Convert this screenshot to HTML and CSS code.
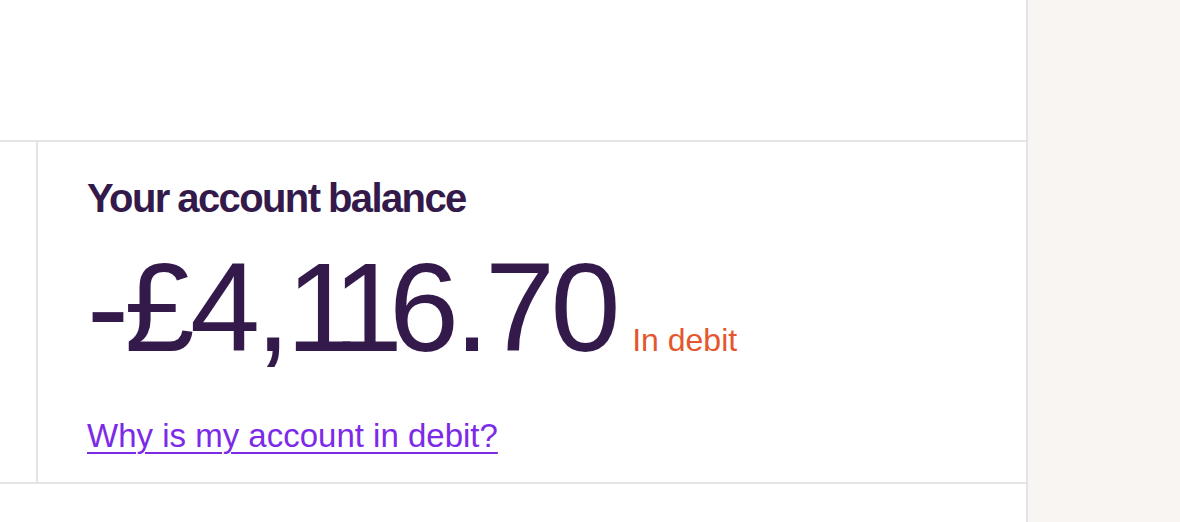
FILE: index.html
```html
<html>
	<head>
		<link rel="stylesheet" href="styles.css">
	</head>
	<body>
		<div class="page">
			<div class="main">
				<div class="topSpace"></div>
				<div class="balanceRow">
					<div class="gutter"></div>
					<div class="balanceBox">
						<h2 class="balanceTitle">Your account balance</h2>
						<div class="amountLine">
							<span class="amount">-£4,<span class="narrowOnes">11</span>6.70</span>
							<span class="debitTag">In debit</span>
						</div>
						<a href="#" class="debitLink">Why is my account in debit?</a>
					</div>
				</div>
			</div>
			<div class="side"></div>
		</div>
	</body>
</html>
```

FILE: styles.css
```css
body{ margin: 0; background: #ffffff; font-family: "Liberation Sans", Arial, sans-serif; }
.page{ display: flex; height: 522px; }
.main{ width: 1026px; border-right: 2px solid #e4e2e2; }
.side{ flex: 1; background: #f8f5f2; }
.topSpace{ height: 140px; }
.balanceRow{ display: flex; border-top: 2px solid #e4e4e4; border-bottom: 2px solid #e4e4e4; }
.gutter{ width: 36px; border-right: 2px solid #e4e4e4; }
.balanceBox{ padding: 32px 0 26px 49px; display: flex; flex-direction: column; align-items: flex-start; }
.balanceTitle{ margin: 0; font-size: 40px; line-height: 48px; font-weight: bold; letter-spacing: -1.6px; word-spacing: -1px; color: #331a4a; }
.amountLine{ display: flex; align-items: baseline; gap: 16px; margin-top: 23px; }
.amount{ font-size: 126px; line-height: 126px; letter-spacing: -4.5px; color: #331a4a; }
.narrowOnes{ letter-spacing: -14px; }
.debitTag{ font-size: 32px; color: #e4572e; }
.debitLink{ margin-top: 45px; font-size: 33px; line-height: 40px; color: #7d2ae8; text-decoration-thickness: 2px; text-underline-offset: 5px; }
```
